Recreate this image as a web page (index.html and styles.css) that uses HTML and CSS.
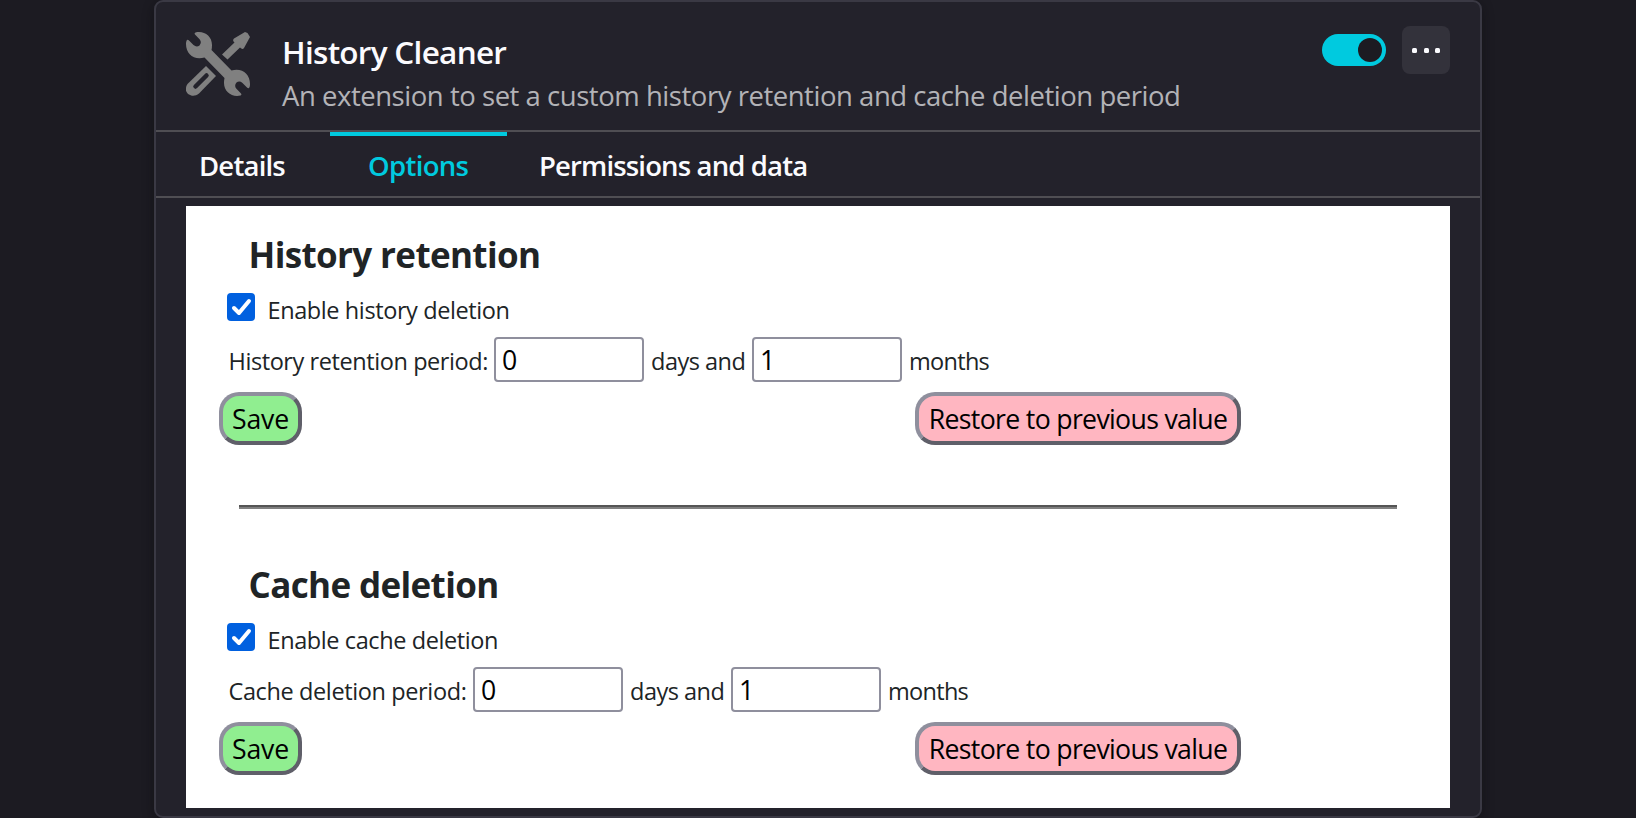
FILE: index.html
```html
<!DOCTYPE html>
<html lang="en">
<head>
<meta charset="utf-8">
<title>History Cleaner</title>
<link rel="stylesheet" href="styles.css">
</head>
<body>
<main class="card">
  <header class="card-header">
    <svg class="addon-icon" viewBox="0 0 64 64" aria-hidden="true">
      <path d="M18.5 25.5C8 28.500 0 22 0 12C0 10 .3 9 1 8Q2 7.500 3 8.500L7.500 13Q10.500 15.500 13.500 13.500Q16 10.500 13.800 7.500L9 2.500Q8 1 9.500 .5C18 -1.500 26 4 26 13Q26 15.500 25.500 18L45.500 38.500C56 35.500 64 42 64 52C64 54 63.700 55 63 56Q62 56.500 61 55.500L56.500 51Q53.500 48.500 50.500 50.500Q48 53.500 50.200 56.500L55 61.500Q56 63 54.500 63.500C46 65.500 38 60 38 51Q38 48.500 38.500 46Z"/>
      <path d="M59 0L61.500 1L64 5L58 16Q56.500 18 54 15.500L41.500 27.500L36 22.500L48.500 10.500Q46 8.500 48 6.500Z"/>
      <path d="M20 34L30 44L13 61.500C5.500 67.500 -4 60 1.500 52Z"/>
      <path class="slot" d="M20.500 43.500L9.500 54.500"/>
    </svg>
    <div class="intro">
      <h1 class="title">History Cleaner</h1>
      <p class="description">An extension to set a custom history retention and cache deletion period</p>
    </div>
    <div class="actions">
      <span class="toggle"><span class="knob"></span></span>
      <span class="more"><i></i><i></i><i></i></span>
    </div>
  </header>
  <nav class="tabs">
    <a class="tab details">Details</a>
    <a class="tab options">Options</a>
    <a class="tab permissions">Permissions and data</a>
  </nav>
  <div class="panel">
    <section class="group">
      <h2>History retention</h2>
      <label class="enable"><svg class="check" viewBox="0 0 28 28"><rect width="28" height="28" rx="4"/><path d="M7 15L12 20L22 8"/></svg><span>Enable history deletion</span></label>
      <div class="period">
        <span class="caption history">History retention period:</span>
        <input type="text" value="0"><span class="days">days and</span><input type="text" value="1"><span class="months">months</span>
      </div>
      <div class="buttons"><button class="save">Save</button><button class="restore">Restore to previous value</button></div>
    </section>
    <hr>
    <section class="group">
      <h2>Cache deletion</h2>
      <label class="enable"><svg class="check" viewBox="0 0 28 28"><rect width="28" height="28" rx="4"/><path d="M7 15L12 20L22 8"/></svg><span>Enable cache deletion</span></label>
      <div class="period">
        <span class="caption cache">Cache deletion period:</span>
        <input type="text" value="0"><span class="days">days and</span><input type="text" value="1"><span class="months">months</span>
      </div>
      <div class="buttons"><button class="save">Save</button><button class="restore">Restore to previous value</button></div>
    </section>
  </div>
</main>
</body>
</html>
```
FILE: styles.css
```css
* { box-sizing: border-box; }
body {
  margin: 0;
  height: 818px;
  overflow: hidden;
  background: #1c1b22;
  font-family: "Open Sans", "Noto Sans", sans-serif;
  color: #202426;
}
.card {
  width: 1328px;
  height: 818px;
  margin: 0 auto;
  background: #23222b;
  border: 2px solid #3a3944;
  border-radius: 9px;
  box-shadow: 0 4px 12px rgba(12, 12, 13, .45);
}
.card-header {
  display: flex;
  height: 130px;
  padding: 0 30px;
  border-bottom: 2px solid #4f4e53;
}
.addon-icon { width: 64px; height: 64px; margin-top: 30px; fill: #808080; }
.slot { fill: none; stroke: #23222b; stroke-width: 4.5; stroke-linecap: round; }
.intro { margin: 28px 0 0 32px; flex: 1; }
h1, h2, p { margin: 0; }
.title {
  color: #fbfbfe;
  font-size: 31.5px;
  line-height: 44px;
  font-weight: 600;
  letter-spacing: -.72px;
}
.description {
  margin-top: 2px;
  color: #b3b3b7;
  font-size: 27.5px;
  line-height: 40px;
  letter-spacing: -.465px;
  white-space: nowrap;
}
.actions { display: flex; gap: 16px; align-items: center; height: 48px; margin-top: 24px; }
.toggle { display: flex; justify-content: flex-end; width: 64px; height: 32px; padding: 4px; border-radius: 16px; background: #00cadf; }
.knob { width: 24px; height: 24px; border-radius: 50%; background: #1c1b22; }
.more { display: flex; align-items: center; justify-content: center; gap: 6.5px; width: 48px; height: 48px; padding-top: 1px; border-radius: 8px; background: #33323b; }
.more i { width: 5px; height: 5px; border-radius: 1.5px; background: #fbfbfe; }
.tabs { display: flex; height: 66px; border-bottom: 2px solid #4f4e53; }
.tab {
  border-top: 4px solid transparent;
  color: #fbfbfe;
  font-size: 27.5px;
  line-height: 60px;
  font-weight: 600;
  letter-spacing: -.67px;
  white-space: nowrap;
}
.details { width: 174px; padding-left: 43px; letter-spacing: -.8px; }
.options { width: 177px; padding-left: 38px; color: #00cadf; border-color: #00cadf; }
.permissions { padding-left: 32px; letter-spacing: -.85px; }
.panel { height: 602px; margin: 8px 30px 0; padding: 24px 32px 0 33px; background: #fff; }
h2 { padding-left: 29.5px; font-size: 35px; line-height: 50px; letter-spacing: -.63px; }
.enable { display: flex; height: 28px; margin: 13px 0 16px 8px; font-size: 23.5px; line-height: 28px; letter-spacing: -.4px; }
.enable span { padding: 3px 0 0 12.5px; }
.check { width: 28px; height: 28px; fill: #0060df; }
.check path { fill: none; stroke: #fff; stroke-width: 4; stroke-linecap: round; stroke-linejoin: round; }
.period { display: flex; height: 45px; padding-left: 8px; font-size: 23.5px; line-height: 49px; letter-spacing: -.38px; }
.caption { padding-left: 1.5px; }
.history { width: 267px; letter-spacing: -.42px; }
.cache { width: 246px; }
.period input {
  width: 150px;
  height: 45px;
  padding: 0 6px;
  border: 2px solid #8f8f9d;
  border-radius: 4px;
  background: #fff;
  color: #000;
  font: 26.67px "Open Sans", sans-serif;
}
.days { width: 108px; padding-left: 7px; letter-spacing: -.5px; }
.months { padding-left: 7px; letter-spacing: -.7px; }
.buttons { display: flex; justify-content: space-between; width: 1022px; margin-top: 10px; }
button {
  height: 53px;
  padding: 0;
  border: 4px solid;
  border-color: #8f8f9d #5f5f69 #5f5f69 #8f8f9d;
  border-radius: 20px;
  color: #000;
  font: 26.67px/45px "Open Sans", sans-serif;
}
.save { width: 83px; background: #90ee90; letter-spacing: -.2px; }
.restore { width: 326px; background: #ffb6c1; letter-spacing: -.67px; }
hr {
  height: 4px;
  margin: 60px 21px 51px 20px;
  border: 0;
  border-top: 2px solid #555;
  background: #808080;
}
```
